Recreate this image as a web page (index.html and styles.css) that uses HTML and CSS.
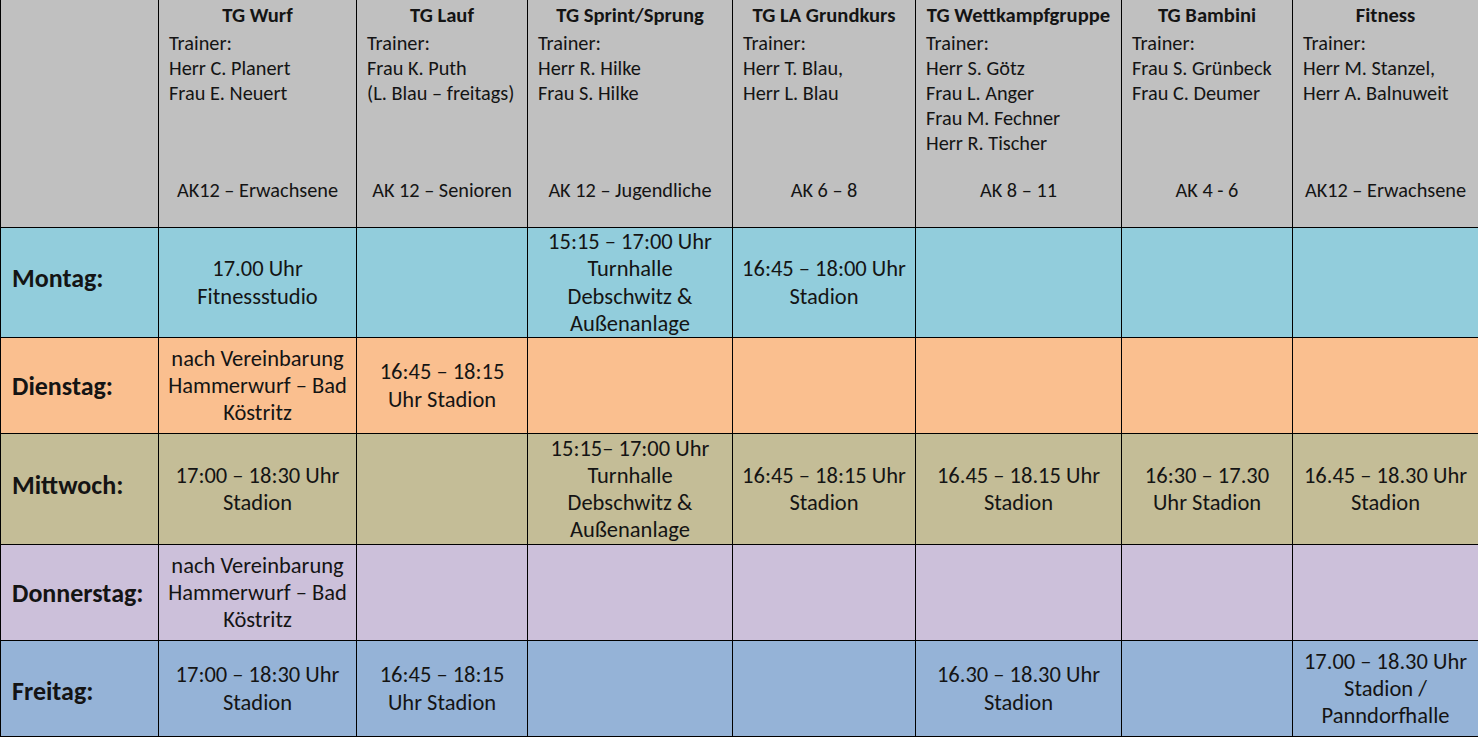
FILE: index.html
```html
<!DOCTYPE html>
<html lang="de">
<head>
<meta charset="utf-8">
<title>Trainingszeiten</title>
<link rel="stylesheet" href="styles.css">
</head>
<body>
<table class="plan">
  <colgroup>
    <col class="c0"><col class="c1"><col class="c2"><col class="c3"><col class="c4"><col class="c5"><col class="c6"><col class="c7">
  </colgroup>
  <thead>
    <tr class="head">
      <th class="corner"></th>
      <th><div class="hc"><div class="title">TG Wurf</div><div class="tr">Trainer:<br>Herr C. Planert<br>Frau E. Neuert</div><div class="ak">AK12 – Erwachsene</div></div></th>
      <th><div class="hc"><div class="title">TG Lauf</div><div class="tr">Trainer:<br>Frau K. Puth<br>(L. Blau – freitags)</div><div class="ak">AK 12 – Senioren</div></div></th>
      <th><div class="hc"><div class="title">TG Sprint/Sprung</div><div class="tr">Trainer:<br>Herr R. Hilke<br>Frau S. Hilke</div><div class="ak">AK 12 – Jugendliche</div></div></th>
      <th><div class="hc"><div class="title">TG LA Grundkurs</div><div class="tr">Trainer:<br>Herr T. Blau,<br>Herr L. Blau</div><div class="ak">AK 6 – 8</div></div></th>
      <th><div class="hc"><div class="title">TG Wettkampfgruppe</div><div class="tr">Trainer:<br>Herr S. Götz<br>Frau L. Anger<br>Frau M. Fechner<br>Herr R. Tischer</div><div class="ak">AK 8 – 11</div></div></th>
      <th><div class="hc"><div class="title">TG Bambini</div><div class="tr">Trainer:<br>Frau S. Grünbeck<br>Frau C. Deumer</div><div class="ak">AK 4 - 6</div></div></th>
      <th><div class="hc"><div class="title">Fitness</div><div class="tr">Trainer:<br>Herr M. Stanzel,<br>Herr A. Balnuweit</div><div class="ak">AK12 – Erwachsene</div></div></th>
    </tr>
  </thead>
  <tbody>
    <tr class="mo">
      <th class="day"><span class="dl">Montag:</span></th>
      <td>17.00 Uhr<br>Fitnessstudio</td>
      <td></td>
      <td>15:15 – 17:00 Uhr<br>Turnhalle<br>Debschwitz &amp;<br>Außenanlage</td>
      <td>16:45 – 18:00 Uhr<br>Stadion</td>
      <td></td><td></td><td></td>
    </tr>
    <tr class="di">
      <th class="day"><span class="dl">Dienstag:</span></th>
      <td>nach Vereinbarung<br>Hammerwurf – Bad<br>Köstritz</td>
      <td>16:45 – 18:15<br>Uhr Stadion</td>
      <td></td><td></td><td></td><td></td><td></td>
    </tr>
    <tr class="mi">
      <th class="day"><span class="dl">Mittwoch:</span></th>
      <td>17:00 – 18:30 Uhr<br>Stadion</td>
      <td></td>
      <td>15:15– 17:00 Uhr<br>Turnhalle<br>Debschwitz &amp;<br>Außenanlage</td>
      <td>16:45 – 18:15 Uhr<br>Stadion</td>
      <td>16.45 – 18.15 Uhr<br>Stadion</td>
      <td>16:30 – 17.30<br>Uhr Stadion</td>
      <td>16.45 – 18.30 Uhr<br>Stadion</td>
    </tr>
    <tr class="do">
      <th class="day"><span class="dl">Donnerstag:</span></th>
      <td>nach Vereinbarung<br>Hammerwurf – Bad<br>Köstritz</td>
      <td></td><td></td><td></td><td></td><td></td><td></td>
    </tr>
    <tr class="fr">
      <th class="day"><span class="dl">Freitag:</span></th>
      <td>17:00 – 18:30 Uhr<br>Stadion</td>
      <td>16:45 – 18:15<br>Uhr Stadion</td>
      <td></td><td></td>
      <td>16.30 – 18.30 Uhr<br>Stadion</td>
      <td></td>
      <td>17.00 – 18.30 Uhr<br>Stadion /<br>Panndorfhalle</td>
    </tr>
  </tbody>
</table>
</body>
</html>
```

FILE: styles.css
```css
html, body {
  margin: 0;
  padding: 0;
  background: #ffffff;
}

body {
  font-family: "Carlito", "Lato", "Noto Sans", sans-serif;
  color: #141414;
  width: 1478px;
  height: 737px;
  overflow: hidden;
}

.plan {
  border-collapse: collapse;
  table-layout: fixed;
  width: 1478px;
}

.c0 { width: 158px; }
.c1 { width: 198px; }
.c2 { width: 171px; }
.c3 { width: 205px; }
.c4 { width: 183px; }
.c5 { width: 206px; }
.c6 { width: 171px; }
.c7 { width: 186px; }

.plan th,
.plan td {
  border: 1px solid #000;
  padding: 0;
}

.head th {
  background: #c0c0c0;
  height: 227px;
  vertical-align: top;
  font-weight: normal;
  border-top: none;
}

.hc {
  height: 227px;
  display: flex;
  flex-direction: column;
  box-sizing: border-box;
  padding: 3px 0 24px 0;
  font-size: 20.3px;
  line-height: 25px;
}

.title {
  font-weight: bold;
  text-align: center;
  font-size: 20.6px;
  line-height: 25px;
}

.tr {
  text-align: left;
  padding-left: 10px;
  margin-top: 3px;
}

.ak {
  margin-top: auto;
  text-align: center;
}

.plan td {
  text-align: center;
  vertical-align: middle;
  font-size: 22.5px;
  line-height: 27.2px;
}

.plan .day {
  text-align: left;
  padding-left: 11px;
  font-size: 26px;
  font-weight: bold;
  vertical-align: middle;
}

.dl {
  display: block;
}

.mo .dl { margin-bottom: 10px; }
.mi .dl { margin-top: 0; margin-bottom: 8px; }
.fr .dl { margin-top: 4px; }

.mo th, .mo td { background: #92cddc; height: 109px; }
.di th, .di td { background: #fabf8f; height: 95px; }
.mi th, .mi td { background: #c4bd97; height: 110px; }
.do th, .do td { background: #ccc0da; height: 95px; }
.fr th, .fr td { background: #95b3d7; height: 95px; }
```
